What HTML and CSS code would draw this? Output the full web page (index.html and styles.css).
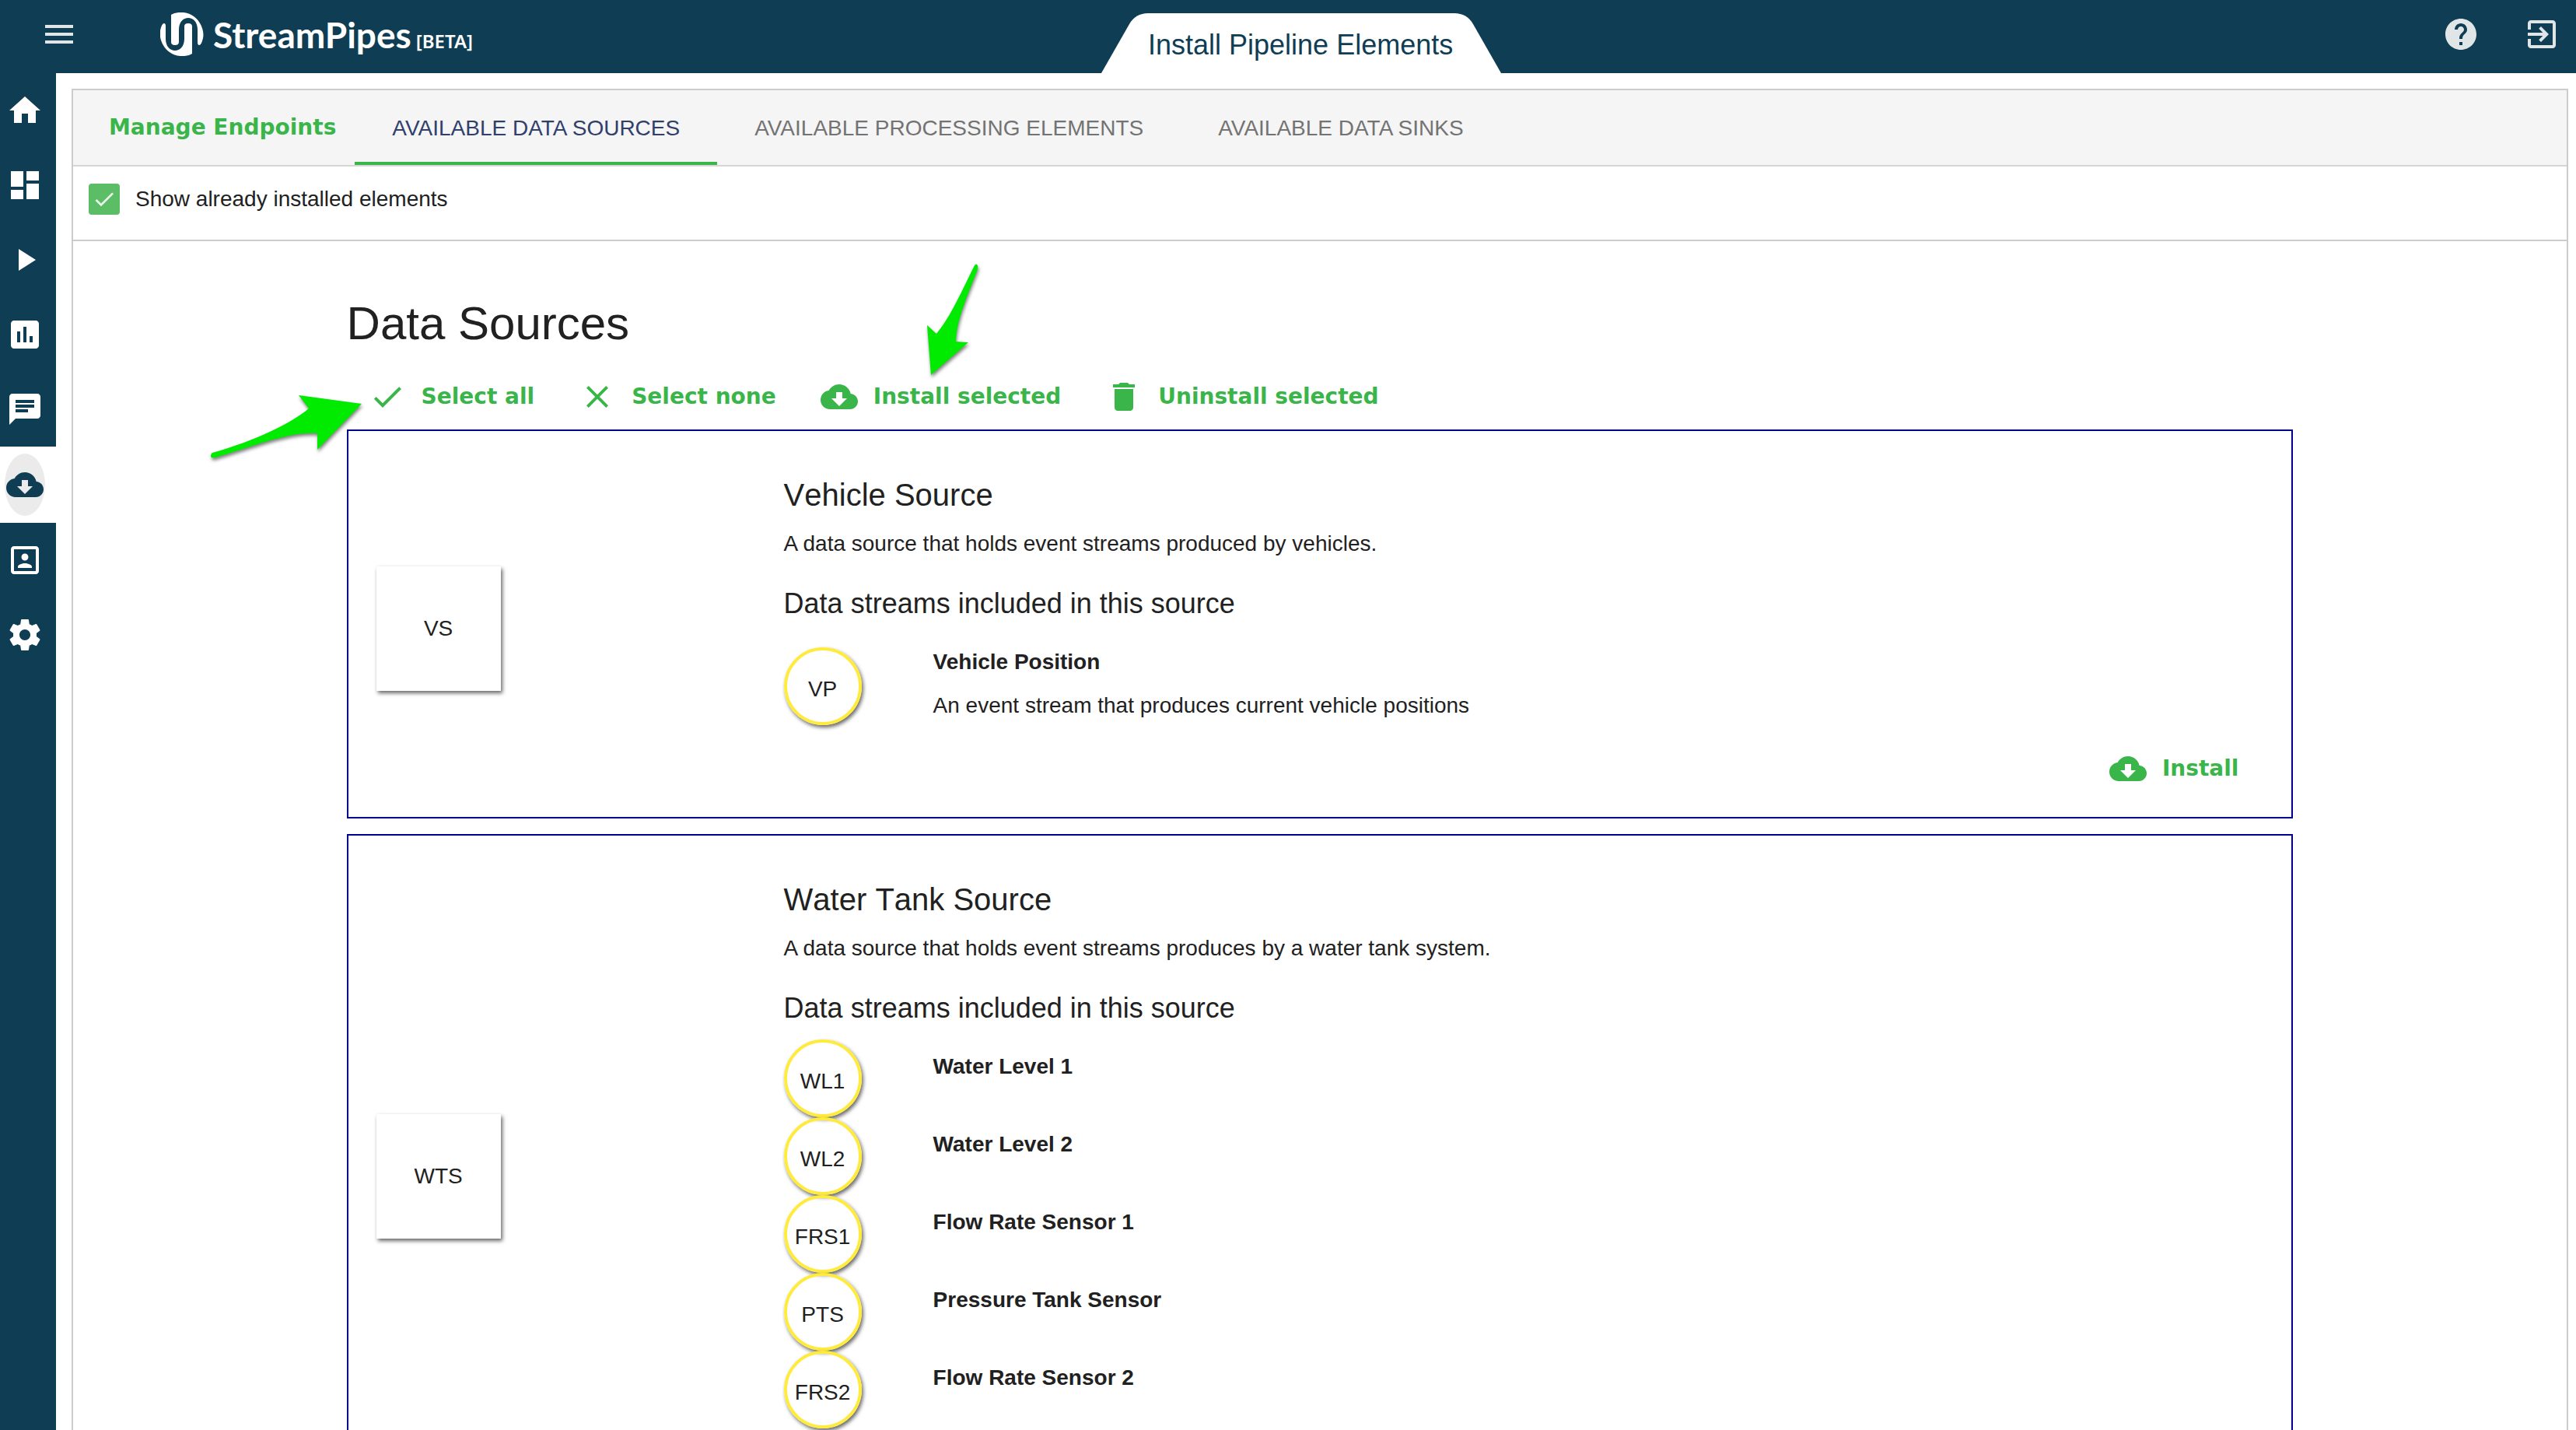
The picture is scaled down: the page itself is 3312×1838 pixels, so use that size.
FILE: index.html
```
<!DOCTYPE html>
<html lang="en">
<head>
<meta charset="utf-8">
<title>StreamPipes</title>
<link rel="stylesheet" href="styles.css">
</head>
<body>
<svg class="sprite" aria-hidden="true">
  <symbol id="i-menu" viewBox="0 0 24 24"><path d="M3 18h18v-2H3v2zm0-5h18v-2H3v2zm0-7v2h18V6H3z"/></symbol>
  <symbol id="i-help" viewBox="0 0 24 24"><path d="M12 2C6.48 2 2 6.48 2 12s4.480 10 10 10 10-4.480 10-10S17.520 2 12 2zm1 17h-2v-2h2v2zm2.070-7.750l-.9.920C13.450 12.900 13 13.500 13 15h-2v-.5c0-1.100.450-2.100 1.170-2.830l1.240-1.260c.370-.360.590-.860.590-1.410 0-1.100-.9-2-2-2s-2 .9-2 2H8c0-2.210 1.790-4 4-4s4 1.790 4 4c0 .880-.360 1.680-.930 2.250z"/></symbol>
  <symbol id="i-exit" viewBox="0 0 24 24"><path d="M10.090 15.590L11.500 17l5-5-5-5-1.410 1.410L12.670 11H3v2h9.670l-2.580 2.590zM19 3H5c-1.110 0-2 .9-2 2v4h2V5h14v14H5v-4H3v4c0 1.100.890 2 2 2h14c1.100 0 2-.9 2-2V5c0-1.100-.9-2-2-2z"/></symbol>
  <symbol id="i-home" viewBox="0 0 24 24"><path d="M10 20v-6h4v6h5v-8h3L12 3 2 12h3v8z"/></symbol>
  <symbol id="i-dashboard" viewBox="0 0 24 24"><path d="M3 13h8V3H3v10zm0 8h8v-6H3v6zm10 0h8V11h-8v10zm0-18v6h8V3h-8z"/></symbol>
  <symbol id="i-play" viewBox="0 0 24 24"><path d="M8 5v14l11-7z"/></symbol>
  <symbol id="i-chart" viewBox="0 0 24 24"><path d="M19 3H5c-1.100 0-2 .9-2 2v14c0 1.100.9 2 2 2h14c1.100 0 2-.9 2-2V5c0-1.100-.9-2-2-2zM9 17H7v-7h2v7zm4 0h-2V7h2v10zm4 0h-2v-4h2v4z"/></symbol>
  <symbol id="i-chat" viewBox="0 0 24 24"><path d="M20 2H4c-1.100 0-1.990.9-1.990 2L2 22l4-4h14c1.100 0 2-.9 2-2V4c0-1.100-.9-2-2-2zM6 9h12v2H6V9zm8 5H6v-2h8v2zm4-6H6V6h12v2z"/></symbol>
  <symbol id="i-cloud" viewBox="0 0 24 24"><path d="M19.350 10.040C18.670 6.590 15.640 4 12 4 9.110 4 6.600 5.640 5.350 8.040 2.340 8.360 0 10.910 0 14c0 3.310 2.690 6 6 6h13c2.760 0 5-2.240 5-5 0-2.640-2.050-4.780-4.650-4.960zM17 13l-5 5-5-5h3V9h4v4h3z"/></symbol>
  <symbol id="i-person" viewBox="0 0 24 24"><path d="M12 12.250c1.240 0 2.250-1.010 2.250-2.250S13.240 7.750 12 7.750 9.750 8.760 9.750 10s1.010 2.250 2.250 2.250zm4.500 4c0-1.500-3-2.250-4.500-2.250s-4.500.750-4.500 2.250V17h9v-.750zM19 3H5c-1.100 0-2 .9-2 2v14c0 1.100.9 2 2 2h14c1.100 0 2-.9 2-2V5c0-1.100-.9-2-2-2zm0 16H5V5h14v14z"/></symbol>
  <symbol id="i-gear" viewBox="0 0 24 24"><path d="M19.430 12.980c.040-.320.070-.640.070-.980s-.030-.660-.070-.980l2.110-1.650c.190-.150.240-.420.120-.640l-2-3.460c-.120-.220-.390-.3-.610-.220l-2.490 1c-.520-.4-1.080-.730-1.690-.980l-.380-2.650C14.460 2.180 14.250 2 14 2h-4c-.250 0-.460.180-.490.420l-.380 2.650c-.610.250-1.170.590-1.690.980l-2.490-1c-.230-.090-.490 0-.610.220l-2 3.460c-.130.220-.070.490.120.640l2.110 1.650c-.040.320-.070.650-.070.980s.030.660.070.980l-2.110 1.650c-.190.150-.240.420-.120.640l2 3.460c.120.220.390.3.610.220l2.490-1c.520.4 1.080.730 1.690.980l.380 2.650c.030.240.240.420.490.420h4c.250 0 .460-.180.490-.420l.380-2.650c.610-.250 1.170-.590 1.690-.980l2.490 1c.230.090.490 0 .610-.220l2-3.460c.120-.220.070-.490-.120-.640l-2.110-1.650zM12 15.500c-1.930 0-3.500-1.570-3.500-3.500s1.570-3.500 3.500-3.500 3.500 1.570 3.500 3.500-1.570 3.500-3.500 3.500z"/></symbol>
  <symbol id="i-check" viewBox="0 0 24 24"><path d="M9 16.170L4.830 12l-1.420 1.410L9 19 21 7l-1.410-1.410z"/></symbol>
  <symbol id="i-close" viewBox="0 0 24 24"><path d="M19 6.410L17.590 5 12 10.590 6.410 5 5 6.410 10.590 12 5 17.590 6.410 19 12 13.410 17.590 19 19 17.590 13.410 12z"/></symbol>
  <symbol id="i-trash" viewBox="0 0 24 24"><path d="M6 19c0 1.100.9 2 2 2h8c1.100 0 2-.9 2-2V7H6v12zM19 4h-3.500l-1-1h-5l-1 1H5v2h14V4z"/></symbol>
</svg>

<header class="topbar">
  <div class="topbar-side">
    <button class="icon-button" type="button" aria-label="Menu"><svg class="icon"><use href="#i-menu"/></svg></button>
    <a class="logo" href="#">
      <svg class="logo-mark" viewBox="0 0 56 56" aria-hidden="true">
        <path d="M14 3C20-1 34-2 43 5C52 11 57 24 55 33Q53 42 50 42Q48 42 48 38V22C48 2 24 2 24 22V38Q24 42 19 42Q14 42 14 38Z"/>
        <path d="M41 53C35 57 21 58 12 51C3 45-2 32 0 23Q2 14 5 14Q7 14 7 18V34C7 54 31 54 31 34V18Q31 14 36 14Q41 14 41 18Z"/>
      </svg>
      <span class="logo-text"><span class="logo-name">StreamPipes</span><span class="logo-tag">[BETA]</span></span>
    </a>
  </div>
  <div class="page-tab">
    <svg class="page-tab-shape" viewBox="0 0 514 77" preserveAspectRatio="none" aria-hidden="true"><path d="M0 77L36 14Q44 0 60 0H454Q470 0 478 14L514 77Z"/></svg>
    <h1 class="page-title">Install Pipeline Elements</h1>
  </div>
  <div class="topbar-side topbar-end">
    <button class="icon-button" type="button" aria-label="Help"><svg class="icon"><use href="#i-help"/></svg></button>
    <button class="icon-button" type="button" aria-label="Log out"><svg class="icon"><use href="#i-exit"/></svg></button>
  </div>
</header>

<div class="shell">
  <nav class="sidebar" aria-label="Main">
    <a class="side-link" href="#" aria-label="Home"><svg class="icon"><use href="#i-home"/></svg></a>
    <a class="side-link" href="#" aria-label="Dashboard"><svg class="icon"><use href="#i-dashboard"/></svg></a>
    <a class="side-link" href="#" aria-label="Pipelines"><svg class="icon"><use href="#i-play"/></svg></a>
    <a class="side-link" href="#" aria-label="Visualizations"><svg class="icon"><use href="#i-chart"/></svg></a>
    <a class="side-link" href="#" aria-label="Notifications"><svg class="icon"><use href="#i-chat"/></svg></a>
    <a class="side-link active" href="#" aria-label="Install" aria-current="page"><span class="focus-ring"><svg class="icon"><use href="#i-cloud"/></svg></span></a>
    <a class="side-link" href="#" aria-label="Profile"><svg class="icon"><use href="#i-person"/></svg></a>
    <a class="side-link" href="#" aria-label="Settings"><svg class="icon"><use href="#i-gear"/></svg></a>
  </nav>

  <main class="panel">
    <div class="tabs">
      <button class="text-button manage" type="button">Manage Endpoints</button>
      <button class="tab active" type="button">AVAILABLE DATA SOURCES</button>
      <button class="tab" type="button">AVAILABLE PROCESSING ELEMENTS</button>
      <button class="tab" type="button">AVAILABLE DATA SINKS</button>
    </div>
    <div class="filter">
      <label class="check">
        <span class="check-box"><input type="checkbox" checked><svg class="check-mark"><use href="#i-check"/></svg></span>
        Show already installed elements
      </label>
    </div>

    <div class="content">
      <h2 class="section-title">Data Sources</h2>
      <div class="actions">
        <button class="text-button" type="button"><svg class="icon"><use href="#i-check"/></svg>Select all</button>
        <button class="text-button" type="button"><svg class="icon"><use href="#i-close"/></svg>Select none</button>
        <button class="text-button" type="button"><svg class="icon"><use href="#i-cloud"/></svg>Install selected</button>
        <button class="text-button" type="button"><svg class="icon"><use href="#i-trash"/></svg>Uninstall selected</button>
      </div>

      <article class="card">
        <div class="source-icon">VS</div>
        <div class="source">
          <h3 class="source-title">Vehicle Source</h3>
          <p class="source-text">A data source that holds event streams produced by vehicles.</p>
          <h4 class="streams-title">Data streams included in this source</h4>
          <ul class="streams">
            <li class="stream"><span class="stream-icon">VP</span><div class="stream-body"><strong>Vehicle Position</strong><p class="stream-text">An event stream that produces current vehicle positions</p></div></li>
          </ul>
          <div class="card-actions"><button class="text-button" type="button"><svg class="icon"><use href="#i-cloud"/></svg>Install</button></div>
        </div>
      </article>

      <article class="card">
        <div class="source-icon">WTS</div>
        <div class="source">
          <h3 class="source-title">Water Tank Source</h3>
          <p class="source-text">A data source that holds event streams produces by a water tank system.</p>
          <h4 class="streams-title">Data streams included in this source</h4>
          <ul class="streams">
            <li class="stream"><span class="stream-icon">WL1</span><div class="stream-body"><strong>Water Level 1</strong></div></li>
            <li class="stream"><span class="stream-icon">WL2</span><div class="stream-body"><strong>Water Level 2</strong></div></li>
            <li class="stream"><span class="stream-icon">FRS1</span><div class="stream-body"><strong>Flow Rate Sensor 1</strong></div></li>
            <li class="stream"><span class="stream-icon">PTS</span><div class="stream-body"><strong>Pressure Tank Sensor</strong></div></li>
            <li class="stream"><span class="stream-icon">FRS2</span><div class="stream-body"><strong>Flow Rate Sensor 2</strong></div></li>
          </ul>
          <div class="card-actions"></div>
        </div>
      </article>
    </div>
  </main>
</div>

<svg class="pointer pointer-select" viewBox="260 500 220 100" aria-hidden="true"><path d="M465 519L384 508L397 525C376 543 330 566 273 582C269 586 271 590 277 588C325 574 372 554 408 557V578Z"/></svg>
<svg class="pointer pointer-install" viewBox="1180 330 90 160" aria-hidden="true"><path d="M1197 482L1192 418L1204 429C1220 410 1232 384 1253 341C1256 338 1258 341 1257 346C1244 380 1230 410 1229 439L1245 440Z"/></svg>
</body>
</html>
```
FILE: styles.css
```
:root {
  --navy: #0f3e54;
  --green: #39b54a;
  --line: #cccccc;
  --ink: #212121;
}

* { box-sizing: border-box; }

body {
  margin: 0;
  height: 100vh;
  overflow: hidden;
  display: flex;
  flex-direction: column;
  background: #fff;
  color: var(--ink);
  font-family: "Liberation Sans", Arial, sans-serif;
  font-size: 28px;
  line-height: 32px;
}

h1, h2, h3, h4, p, ul { margin: 0; padding: 0; font-weight: 400; }
ul { list-style: none; }
button { border: 0; background: none; padding: 0; font: inherit; color: inherit; cursor: pointer; }
a { color: inherit; text-decoration: none; }

.sprite { display: none; }
.icon { display: block; flex: none; width: 48px; height: 48px; fill: currentColor; }

/* Top bar */
.topbar {
  display: grid;
  grid-template-columns: 1fr auto 1fr;
  flex: none;
  height: 94px;
  background: var(--navy);
  color: #fff;
}
.topbar-side { display: flex; align-items: center; padding: 0 20px 6px 52px; }
.topbar-end { justify-content: flex-end; gap: 56px; }
.icon-button { opacity: .87; }
.logo { display: flex; align-items: center; margin-left: 106px; }
.logo-mark { width: 56px; height: 56px; fill: #fff; }
.logo-text { display: flex; align-items: baseline; gap: 6px; margin-left: 12px; padding-top: 2px; }
.logo-name { font: 700 46px/56px "Liberation Sans Narrow", Lato, sans-serif; }
.logo-tag { font: 600 24px/32px "Noto Sans", sans-serif; }

.page-tab { display: grid; align-self: end; margin-left: 34px; color: var(--navy); }
.page-tab > * { grid-area: 1 / 1; }
.page-tab-shape { width: 100%; height: 77px; fill: #fff; }
.page-title { padding: 21px 60px 0; font-size: 36px; line-height: 40px; }

/* Side navigation */
.shell { flex: 1; min-height: 0; display: flex; }
.sidebar { flex: none; width: 72px; background: var(--navy); color: #fff; }
.side-link { display: flex; align-items: center; height: 96px; padding-left: 8px; }
.side-link.active { height: 98px; padding-left: 6px; background: #fff; color: var(--navy); }
.focus-ring {
  display: grid;
  place-items: center;
  width: 52px;
  height: 80px;
  border-radius: 50%;
  background: #ebebeb;
}

/* Main panel */
.panel {
  flex: 1;
  min-width: 0;
  margin: 20px 10px 0 20px;
  border: 2px solid var(--line);
  border-bottom: 0;
}
.tabs { display: flex; height: 98px; background: #f5f5f5; border-bottom: 2px solid #d6d6d6; }
.tab { padding: 5px 48px 0; border-bottom: 4px solid transparent; color: #737373; }
.tab.active { border-bottom-color: var(--green); color: #303f6b; }

.text-button {
  display: flex;
  align-items: center;
  gap: 20px;
  color: var(--green);
  font-family: "Arial Black", "DejaVu Sans", sans-serif;
  font-weight: 700;
  white-space: nowrap;
}
.manage { padding: 0 24px 0 46px; }

.filter { height: 96px; padding: 22px 20px; border-bottom: 2px solid var(--line); }
.check { display: flex; align-items: center; gap: 20px; height: 40px; }
.check-box { display: grid; width: 40px; height: 40px; }
.check-box > * { grid-area: 1 / 1; }
.check-box input {
  appearance: none;
  width: 40px;
  height: 40px;
  margin: 0;
  border-radius: 4px;
  background: #5bbd66;
}
.check-mark { width: 32px; height: 32px; place-self: center; fill: #fff; opacity: .87; pointer-events: none; }

.content { width: 80%; margin: 0 auto; padding: 70px 31px 0; }
.section-title { font-size: 60px; line-height: 72px; }
.actions { display: flex; gap: 57px; padding: 34px 0 18px 28px; }

/* Source cards */
.card {
  display: flex;
  align-items: center;
  margin-bottom: 20px;
  border: 2px solid #00008b;
}
.source-icon {
  flex: none;
  display: grid;
  place-items: center;
  width: 160px;
  height: 160px;
  margin: 12px 364px 0 36px;
  box-shadow: 2px 3px 5px rgba(0, 0, 0, .6);
}
.source { flex: 1; padding: 58px 68px 38px 0; }
.source-title { font-size: 40px; line-height: 48px; font-kerning: none; }
.source-text { margin-top: 23px; }
.streams-title { margin: 39px 0 18px; font-size: 36px; line-height: 44px; }
.stream { display: flex; align-items: center; min-height: 100px; }
.stream-icon {
  flex: none;
  display: grid;
  place-items: center;
  width: 100px;
  height: 100px;
  padding-top: 8px;
  border: 4px solid #ffeb3b;
  border-radius: 50%;
  box-shadow: 2px 3px 5px rgba(0, 0, 0, .6);
}
.stream-body { align-self: stretch; margin-left: 92px; padding: 19px 0 25px; }
.stream-text { margin-top: 24px; }
.card-actions { display: flex; justify-content: flex-end; min-height: 64px; padding-top: 16px; }

/* Annotation arrows laid over the page */
.pointer { position: absolute; fill: #00eb00; filter: drop-shadow(1px 3px 2px rgba(0, 0, 0, .5)); }
.pointer-select { left: 260px; top: 500px; width: 220px; height: 100px; }
.pointer-install { left: 1180px; top: 330px; width: 90px; height: 160px; }
```
